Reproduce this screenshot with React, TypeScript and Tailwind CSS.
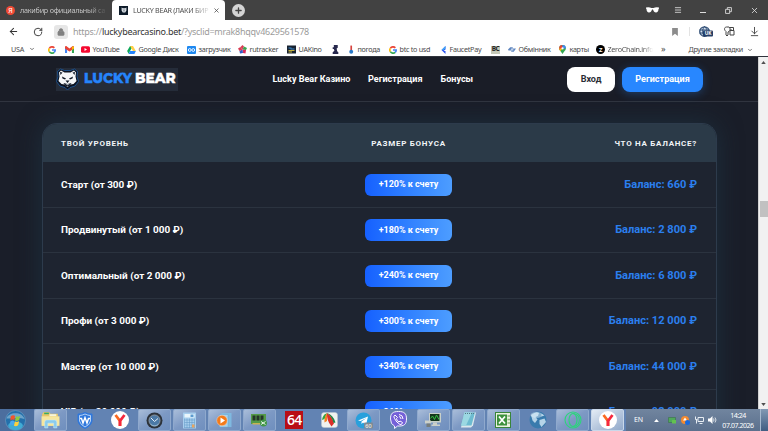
import type { ReactNode } from "react"
import { ArrowDownToLine, ArrowLeft, ChevronDown, Lock, Menu, Plus, RotateCw, X } from "lucide-react"

const levels = [
  { name: "Старт (от 300 ₽)", bonus: "+120% к счету", balance: "Баланс: 660 ₽" },
  { name: "Продвинутый (от 1 000 ₽)", bonus: "+180% к счету", balance: "Баланс: 2 800 ₽" },
  { name: "Оптимальный (от 2 000 ₽)", bonus: "+240% к счету", balance: "Баланс: 6 800 ₽" },
  { name: "Профи (от 3 000 ₽)", bonus: "+300% к счету", balance: "Баланс: 12 000 ₽" },
  { name: "Мастер (от 10 000 ₽)", bonus: "+340% к счету", balance: "Баланс: 44 000 ₽" },
  { name: "VIP (от 20 000 ₽)", bonus: "+360% к счету", balance: "Баланс: 92 000 ₽" },
]

function GoogleIcon() {
  return (
    <svg viewBox="0 0 24 24" className="h-[8px] w-[8px] shrink-0" fill="none" strokeWidth="5">
      <path d="M19 5.5A9.5 9.5 0 0 0 4 7" stroke="#ea4335" />
      <path d="M4 7a9.5 9.5 0 0 0 0 10" stroke="#fbbc05" />
      <path d="M4 17a9.5 9.5 0 0 0 14.500 2" stroke="#34a853" />
      <path d="M18.500 19a9 9 0 0 0 3-7H12" stroke="#4285f4" />
    </svg>
  )
}

function GmailIcon() {
  return (
    <svg viewBox="0 0 24 18" className="h-[7px] w-[9px] shrink-0">
      <path d="M0 2v16h5.500V7z" fill="#4285f4" />
      <path d="M24 2v16h-5.500V7z" fill="#34a853" />
      <path d="M0 3c0-3 3-4 5-2l7 5.500L19 1c2-2 5-1 5 2v3l-5.500 4L12 14 5.500 10 0 6z" fill="#ea4335" />
      <path d="M18.500 1.500 24 1v5l-5.500 4z" fill="#fbbc04" />
    </svg>
  )
}

function DriveIcon() {
  return (
    <svg viewBox="0 0 24 22" className="h-[8px] w-[9px] shrink-0">
      <path d="M8 0h8L8 14l-4 7-4-7z" fill="#0fa958" />
      <path d="M8 0h8l8 14h-8z" fill="#ffcf48" />
      <path d="M8 14h16l-4 8H4z" fill="#2684fc" />
    </svg>
  )
}

function YandexIcon() {
  return (
    <svg viewBox="0 0 36 36" className="h-[18px] w-[18px]">
      <circle cx="18" cy="18" r="18" fill="#fff" />
      <path d="M9 8l9 12v10" fill="none" stroke="#fb6a20" strokeWidth="5.500" />
      <path d="M27 8l-9 12v10" fill="none" stroke="#f5283f" strokeWidth="5.500" />
    </svg>
  )
}

function BearIcon() {
  return (
    <svg viewBox="0 0 46 44" className="h-[22px] w-[23px] shrink-0">
      <path d="M9 2l8 3h12l8-3 6 5-1 10 3 10-7 9-10 3-5 5-5-5-10-3-7-9 3-10L3 7z" fill="#0b1220" stroke="#1d5fa8" strokeWidth="1.500" />
      <path d="M10 5l7 4h12l7-4 4 4-1 8 2 9-6 6-6 1-6 5-6-5-6-1-6-6 2-9-1-8z" fill="#f4f6f8" />
      <path d="M8 8l5 1-4 5zM38 8l-5 1 4 5z" fill="#111a28" />
      <path d="M12 17l8 4-2 2-5-2zM34 17l-8 4 2 2 5-2zM19 25h8l-4 5zM15 30l8 2 8-2-3 5-5 2-5-2z" fill="#111a28" />
      <path d="M19 32h8l-4 3z" fill="#9aa3ae" />
    </svg>
  )
}

function Bookmark({ className, icon, children }: { className: string; icon?: ReactNode; children?: ReactNode }) {
  return (
    <div className={`flex h-full shrink-0 items-center gap-[2.500px] whitespace-nowrap ${className}`}>
      {icon}
      {children && <span>{children}</span>}
    </div>
  )
}

function TabBar() {
  return (
    <div className="flex h-[20px] bg-[#424242] text-[7.200px]">
      <div className="flex h-[20px] w-[112px] items-center pl-[6px]">
        <span className="mr-[5px] flex h-[9px] w-[9px] shrink-0 items-center justify-center rounded-full bg-[#f04a35] text-[7px] leading-none text-white">Я</span>
        <span className="whitespace-nowrap bg-gradient-to-r from-[#cfcfcf] from-80% to-[#555] bg-clip-text tracking-[-0.230px] text-transparent">лакибир официальный са</span>
      </div>
      <div className="flex h-[20px] w-[113px] items-center rounded-t-[4px] bg-white pl-[7px]">
        <span className="mr-[5px] flex h-[9px] w-[9px] shrink-0 items-center justify-center bg-[#0c1a28]">
          <svg viewBox="0 0 10 10" className="h-[6px] w-[6px]">
            <path d="M1 1l2 1h4l2-1v5L7 9H3L1 6z" fill="#dfe5ea" />
            <path d="M3 4h1v1H3zM6 4h1v1H6zM4 6h2v1H4z" fill="#0c1a28" />
          </svg>
        </span>
        <span className="w-[78px] whitespace-nowrap bg-gradient-to-r from-[#444] from-75% to-white bg-clip-text tracking-[-0.300px] text-transparent">LUCKY BEAR (ЛАКИ БИР</span>
        <X className="ml-[2px] h-[7px] w-[7px] shrink-0 text-[#444]" strokeWidth={2.5} />
      </div>
      <div className="flex h-[20px] items-center pl-[7px]">
        <span className="flex h-[13px] w-[13px] items-center justify-center rounded-full bg-[#d4d4d4]">
          <Plus className="h-[9px] w-[9px] text-[#444]" strokeWidth={3.5} />
        </span>
      </div>
      <div className="ml-auto flex h-[20px] items-center text-[#dedede]">
        <svg viewBox="0 0 26 12" className="mr-[15px] h-[6px] w-[13px]" fill="#fff">
          <path d="M0 1q7-1 11 1h4q4-2 11-1v2l-1 1c0 4-2 7-5 7s-5-2-6-6h-2c-1 4-3 6-6 6S1 8 1 4L0 3z" />
        </svg>
        <Menu className="mr-[18px] h-[8px] w-[8px]" strokeWidth={2.5} />
        <span className="mr-[19px] mt-[5px] h-px w-[6px] bg-[#dedede]" />
        <svg viewBox="0 0 12 12" className="mr-[18px] h-[7px] w-[7px]" fill="none" stroke="currentColor" strokeWidth="1.500">
          <path d="M1 4h7v7H1zM4 4V1h7v7H8" />
        </svg>
        <X className="mr-[9px] h-[9px] w-[9px]" strokeWidth={2.2} />
      </div>
    </div>
  )
}

function AddressBar() {
  return (
    <div className="flex h-[23px] items-center bg-white">
      <ArrowLeft className="ml-[8px] h-[11px] w-[11px] text-[#333]" strokeWidth={2.2} />
      <RotateCw className="ml-[14px] h-[10px] w-[10px] text-[#333]" strokeWidth={2.2} />
      <span className="ml-[11px] flex h-[14px] w-[14px] items-center justify-center rounded-[3px] bg-[#e6e6e6]">
        <Lock className="h-[8px] w-[8px] fill-[#808080] text-[#808080]" strokeWidth={2.5} />
      </span>
      <span className="ml-[5px] whitespace-nowrap text-[9px] tracking-[-0.265px] text-[#9b9b9b]">
        https://<span className="text-[#333]">luckybearcasino.bet</span>/?ysclid=mrak8hqqv4629561578
      </span>
      <div className="ml-auto flex items-center text-[#444]">
        <svg viewBox="0 0 10 14" className="h-[8px] w-[6px]" fill="#8c8c8c">
          <path d="M0 0h10v14L5 10l-5 4z" />
        </svg>
        <span className="ml-[11px] h-[9px] w-px bg-[#e3e3e3]" />
        <svg viewBox="0 0 28 22" className="ml-[9px] h-[11px] w-[14px]">
          <circle cx="11" cy="11" r="9.500" fill="#d7e2ef" stroke="#2f4d74" strokeWidth="2.500" />
          <path d="M1 8h20M1 14h10M11 1c-5 5-5 15 0 20M11 1c4 4 5 6 5 8" fill="none" stroke="#2f4d74" strokeWidth="2" />
          <rect x="8" y="9" width="20" height="12" rx="2" fill="#263f66" />
          <text x="18" y="18.500" textAnchor="middle" fill="#fff" fontSize="9.500" fontWeight="700">UK</text>
        </svg>
        <svg viewBox="0 0 22 22" className="ml-[11px] h-[11px] w-[11px]" fill="none" stroke="#444" strokeWidth="2">
          <path d="M4 11C-1 7 1 2 5 2h5c3 2 3 6 0 9l-2 1v6l-2 2-2-2zM11 3h8v5M12 9h8v9h-8zM14 9V6" />
        </svg>
        <ArrowDownToLine className="ml-[14px] mr-[8px] h-[11px] w-[11px]" strokeWidth={2} />
      </div>
    </div>
  )
}

function BookmarksBar() {
  return (
    <div className="flex h-[13px] items-center bg-white pl-[11px] text-[7.200px] tracking-[-0.280px] text-[#4a4a4a]">
      <Bookmark className="w-[37px]">
        <span className="flex items-center gap-[5px]">USA <ChevronDown className="h-[6px] w-[6px]" strokeWidth={3} /></span>
      </Bookmark>
      <Bookmark className="w-[17px]" icon={<GoogleIcon />} />
      <Bookmark className="w-[16px]" icon={<GmailIcon />} />
      <Bookmark
        className="w-[46px]"
        icon={
          <svg viewBox="0 0 18 13" className="h-[7px] w-[9px] shrink-0">
            <rect width="18" height="13" rx="3" fill="#f5082f" />
            <path d="M7 3.500v6l5-3z" fill="#fff" />
          </svg>
        }
      >
        YouTube
      </Bookmark>
      <Bookmark className="w-[60px]" icon={<DriveIcon />}>Google Диск</Bookmark>
      <Bookmark
        className="w-[51px]"
        icon={
          <svg viewBox="0 0 18 16" className="h-[8px] w-[9px] shrink-0" fill="none" stroke="#fff" strokeWidth="1.800">
            <rect width="18" height="16" rx="2" fill="#1e88f0" stroke="none" />
            <circle cx="5.500" cy="8" r="2.800" />
            <circle cx="12.500" cy="8" r="2.800" />
          </svg>
        }
      >
        загрузчик
      </Bookmark>
      <Bookmark
        className="w-[49px]"
        icon={
          <svg viewBox="0 0 18 18" className="h-[9px] w-[9px] shrink-0">
            <path d="M9 9L5 4l4-4 3 3z" fill="#d93c54" />
            <path d="M9 9l3-6 6 3-2 4z" fill="#36a84f" />
            <path d="M9 9l7 1-1 7-5-1z" fill="#d92b58" />
            <path d="M9 9l1 7-6 1-1-5z" fill="#315cc4" />
            <path d="M9 9l-6 3-3-5 5-3z" fill="#d93c54" />
          </svg>
        }
      >
        rutracker
      </Bookmark>
      <Bookmark
        className="w-[45px]"
        icon={
          <svg viewBox="0 0 18 16" className="h-[9px] w-[9px] shrink-0">
            <rect width="18" height="16" fill="#182230" />
            <path d="M3 4h6v2H3zM7 6h8v2H7z" fill="#3a86c9" />
            <path d="M3 9h12v2H3zM3 12h7v2H3z" fill="#c5b23e" />
          </svg>
        }
      >
        UAKino
      </Bookmark>
      <Bookmark
        className="w-[17px]"
        icon={
          <svg viewBox="0 0 12 16" className="h-[9px] w-[7px] shrink-0" fill="#27284d">
            <path d="M3 0h7v5L8 6l1 5 2 2v3H1v-3l3-3-1-3H1V4h2z" />
          </svg>
        }
      />
      <Bookmark
        className="w-[40px]"
        icon={
          <svg viewBox="0 0 8 16" className="mr-[1px] h-[9px] w-[5px] shrink-0">
            <path d="M2 1h3v9H2z" fill="#d7433d" />
            <circle cx="3.500" cy="12" r="3.500" fill="#2878c8" />
          </svg>
        }
      >
        погода
      </Bookmark>
      <Bookmark className="w-[52px]" icon={<GoogleIcon />}>btc to usd</Bookmark>
      <Bookmark
        className="w-[50px]"
        icon={
          <svg viewBox="0 0 12 16" className="h-[8px] w-[6px] shrink-0">
            <path d="M9 0L1 8l8 8V10H5l4-3z" fill="#2953ee" />
            <path d="M9 0v5L5 8 1 8z" fill="#42a7f6" />
          </svg>
        }
      >
        FaucetPay
      </Bookmark>
      <Bookmark
        className="w-[17px]"
        icon={<span className="flex h-[8px] w-[9px] items-center justify-center bg-[#c6cab9] text-[6.500px] font-bold leading-none tracking-[-0.500px] text-[#222]">BC</span>}
      />
      <Bookmark
        className="w-[51px]"
        icon={
          <svg viewBox="0 0 18 14" className="h-[7px] w-[8px] shrink-0">
            <path d="M0 7l5-5h6l-1 3h8l-5 7H7l1-3H1z" fill="#5f86bf" />
            <path d="M7 5h5v4H6z" fill="#bfd0e8" />
          </svg>
        }
      >
        Обмінник
      </Bookmark>
      <Bookmark
        className="w-[37px]"
        icon={
          <svg viewBox="0 0 12 16" className="mr-[1px] h-[9px] w-[7px] shrink-0">
            <path d="M6 0a6 6 0 0 1 6 6c0 4-4 5-6 10C4 11 0 10 0 6a6 6 0 0 1 6-6z" fill="#34a853" />
            <path d="M0 6a6 6 0 0 1 6-6v6L1 9z" fill="#ea4335" />
            <path d="M6 0a6 6 0 0 1 6 6H6z" fill="#4285f4" />
            <path d="M0 6l6 0-4 5z" fill="#fbbc05" />
            <circle cx="6" cy="6" r="2" fill="#fff" />
          </svg>
        }
      >
        карты
      </Bookmark>
      <Bookmark
        className="w-[58px]"
        icon={<span className="flex h-[9px] w-[9px] shrink-0 items-center justify-center rounded-full bg-black text-[6px] font-bold leading-none text-white">Z</span>}
      >
        <span className="bg-gradient-to-r from-[#4a4a4a] from-75% to-white bg-clip-text text-transparent">ZeroChain.info</span>
      </Bookmark>
      <span className="-mt-[2px] ml-[7px] text-[9px] leading-none">»</span>
      <span className="ml-auto whitespace-nowrap">Другие закладки</span>
      <ChevronDown className="ml-[4px] mr-[15px] h-[6px] w-[6px]" strokeWidth={3} />
    </div>
  )
}

function SiteHeader() {
  return (
    <header className="flex h-[45px] shrink-0 items-center border-b border-[#30343f] bg-[#1a1d27] pl-[56px] text-[9.050px] font-bold text-white">
      <div className="flex h-[23px] w-[122px] items-center bg-[#252c39] font-[Montserrat,'Open_Sans',sans-serif] text-[13.700px] font-extrabold leading-none [-webkit-text-stroke:0.350px]">
        <BearIcon />
        <span className="ml-[5px] text-[#2584fb]">LUCKY</span>
        <span className="ml-[3px]">BEAR</span>
      </div>
      <nav className="ml-[94.500px] flex whitespace-nowrap pt-px">
        <a className="w-[95.500px]">Lucky Bear Казино</a>
        <a className="w-[72.500px]">Регистрация</a>
        <a>Бонусы</a>
      </nav>
      <div className="ml-auto mr-[55px] flex gap-[7px]">
        <button className="h-[25px] w-[48px] rounded-[8px] bg-white pt-px text-[#2a2d35]">Вход</button>
        <button className="h-[25px] w-[81px] rounded-[8px] bg-[#2887ff] pt-px shadow-[0_2px_10px_rgba(40,135,255,0.3)]">Регистрация</button>
      </div>
    </header>
  )
}

function LevelTable() {
  return (
    <section className="ml-[42px] mt-[21px] w-[675px] shrink-0 overflow-hidden rounded-t-[15px] border border-b-0 border-[#2d3b4c] bg-[#1e2430] font-bold shadow-[0_0_24px_rgba(32,64,82,0.5)]">
      <div className="grid h-[38px] grid-cols-[1fr_87px_245px] items-center bg-[#2b3a48] pl-[18px] pr-[19px] pt-[1.500px] text-[8px] tracking-[0.720px] text-[#f1f4f7]">
        <span>ТВОЙ УРОВЕНЬ</span>
        <span className="whitespace-nowrap text-center">РАЗМЕР БОНУСА</span>
        <span className="text-right">ЧТО НА БАЛАНСЕ?</span>
      </div>
      {levels.map((level) => (
        <div key={level.name} className="grid h-[45.500px] grid-cols-[1fr_87px_245px] items-center border-b border-[#2b333f] pl-[18px] pr-[19px] pt-px">
          <span className="pt-px text-[9.950px] text-white">{level.name}</span>
          <span className="flex h-[22px] items-center justify-center rounded-[6px] bg-gradient-to-r from-[#1660ff] to-[#4d9dff] text-[9px] tracking-[-0.050px] text-white">{level.bonus}</span>
          <span className="pt-px text-right text-[11.100px] text-[#2b7fee]">{level.balance}</span>
        </div>
      ))}
    </section>
  )
}

function Slot({ variant = "pinned", children }: { variant?: "pinned" | "running" | "focused"; children: ReactNode }) {
  const frames = {
    pinned: "border-transparent",
    running: "border-[#8fa9cd] bg-gradient-to-br from-[#a9bdd9] via-[#7d99c4] to-[#6f8fbe]",
    focused: "border-[#c9d8ea] bg-gradient-to-br from-[#e4ecf5] via-[#b7c8de] to-[#93aacb]",
  }
  return (
    <div className="flex h-full w-[34.830px] shrink-0">
      <div className={`flex h-full w-[33px] items-center justify-center rounded-[2px] border ${frames[variant]}`}>{children}</div>
    </div>
  )
}

function Taskbar() {
  return (
    <div className="flex h-[22px] w-full shrink-0 bg-[#6283b3]">
      <div className="flex w-[34px] shrink-0 items-center bg-[#4c6e9e] pl-[5px]">
        <svg viewBox="0 0 40 40" className="h-[21px] w-[21px]">
          <circle cx="20" cy="20" r="19" fill="#2470ab" stroke="#7ca8ca" />
          <ellipse cx="20" cy="30" rx="14" ry="8" fill="#4fc4e6" opacity=".7" />
          <path d="M3 16C5 4 33 1 37 17 25 13 14 17 3 16z" fill="#9fc4df" opacity=".6" />
          <path d="M11 12q4-3 8-1l-1 8q-4-2-8 1z" fill="#f3562a" />
          <path d="M21 12q4 2 8-1l-2 8q-4 3-8 1z" fill="#8dcb3e" />
          <path d="M10 22q4-3 8-1l-2 8q-4-2-7 1z" fill="#48a8f0" />
          <path d="M19 22q4 2 8-1l-2 8q-4 3-8 1z" fill="#ffd03c" />
        </svg>
      </div>
      <Slot variant="running">
        <svg viewBox="0 0 36 34" className="h-[18px] w-[19px]">
          <path d="M2 6l3-4h10l3 3h14v23H2z" fill="#e8c768" />
          <path d="M6 3h9v3H6z" fill="#36a967" />
          <path d="M16 6h13v4H16z" fill="#f6f4dc" />
          <path d="M1 10h34v18H1z" fill="#f7e69e" />
          <path d="M7 21q0-4 4-4h15q4 0 4 4v11h-6v-9H13v9H7z" fill="#8acbed" stroke="#c9ecfa" />
        </svg>
      </Slot>
      <Slot>
        <svg viewBox="0 0 32 34" className="h-[17px] w-[16px]">
          <path d="M16 1q7 4 14 3v14q-2 10-14 15Q4 28 2 18V4q7 1 14-3z" fill="#2f78dd" stroke="#2f78dd" strokeWidth="2" />
          <path d="M16 4q6 3 11 3v11q-2 8-11 12Q7 26 5 18V7q5 0 11-3z" fill="none" stroke="#e3effc" strokeWidth="1.500" />
          <path d="M6 13h3l3 9 4-11 4 11 3-9h3" fill="none" stroke="#fff" strokeWidth="2.800" />
        </svg>
      </Slot>
      <Slot><YandexIcon /></Slot>
      <Slot variant="running">
        <svg viewBox="0 0 34 34" className="h-[17px] w-[17px]">
          <circle cx="17" cy="17" r="16" fill="#2c323a" />
          <circle cx="17" cy="17" r="11" fill="#4b79a6" stroke="#8b98a6" strokeWidth="2" />
          <path d="M10 12l7 7 7-6" fill="none" stroke="#e4edf5" strokeWidth="2" />
          <path d="M8 23q9 7 18 0-2 6-9 6t-9-6z" fill="#9cc8ea" opacity=".6" />
        </svg>
      </Slot>
      <Slot variant="running">
        <svg viewBox="0 0 26 32" className="h-[17px] w-[13px]">
          <rect width="26" height="32" rx="1" fill="#a8cfee" />
          <path d="M3 3h20v7H3z" fill="#e9f6fc" />
          <path d="M15 4h6v5h-6z" fill="#5b9bd0" />
          <path d="M3 15h20M3 20h20M3 25h20M3 30h20M3 12v19M8 12v19M13 12v19M18 12v19M23 12v19" stroke="#5f95c5" />
          <path d="M18 24h5v6h-5z" fill="#e9a45e" />
        </svg>
      </Slot>
      <Slot variant="running">
        <svg viewBox="0 0 34 30" className="h-[15px] w-[17px]">
          <path d="M11 0h20v28H11z" fill="#7fb9e0" />
          <path d="M7 3h17v25H7z" fill="#a7d3ef" stroke="#6aa4cf" />
          <circle cx="12" cy="15" r="10.500" fill="#f27a1b" stroke="#f7d7bd" />
          <path d="M9 9v12l9-6z" fill="#fff" />
        </svg>
      </Slot>
      <Slot variant="running">
        <svg viewBox="0 0 36 28" className="h-[14px] w-[18px]">
          <path d="M2 2h30v20H2z" fill="#549a48" />
          <path d="M5 5h6v10H5zM13 5h6v10h-6zM21 5h6v10h-6z" fill="#25352a" />
          <path d="M5 20h23v3H5z" fill="#c8b351" />
          <circle cx="27" cy="20" r="7" fill="#419648" />
          <path d="M22 17l9 6M31 17l-9 6" stroke="#e3f5e3" strokeWidth="2" />
        </svg>
      </Slot>
      <Slot>
        <span className="flex h-[18px] w-[18px] items-center justify-center bg-[#b90e15] font-['Open_Sans',sans-serif] text-[14px] font-semibold leading-none tracking-[-0.800px] text-white">64</span>
      </Slot>
      <Slot>
        <svg viewBox="0 0 34 32" className="h-[16px] w-[17px]">
          <rect x="1" y="1" width="32" height="30" rx="5" fill="#f1f2f0" stroke="#bfc9ce" />
          <path d="M12 2Q3 6 2 16l5-2z" fill="#2ea442" />
          <path d="M12 2Q6 10 7 21l5-3z" fill="#f28322" />
          <path d="M12 2q-1 15 9 27l5-6Q23 9 12 2z" fill="#dc3029" />
          <path d="M12 2q12 3 17 19l-4 1Q22 9 12 2z" fill="#218645" />
        </svg>
      </Slot>
      <Slot variant="running">
        <svg viewBox="0 0 36 34" className="h-[17px] w-[18px]">
          <circle cx="17" cy="17" r="16" fill="#28a0dc" />
          <path d="M6 17l20-8-4 17-6-5-3 3v-5l10-7-12 6z" fill="#fff" />
          <rect x="18" y="21" width="18" height="12" rx="2" fill="#7d8a93" />
          <text x="27" y="31" textAnchor="middle" fill="#fff" fontSize="11">60</text>
        </svg>
      </Slot>
      <Slot>
        <svg viewBox="0 0 34 36" className="h-[18px] w-[17px]">
          <path d="M17 1C5 1 1 5 1 16q0 11 8 14v5l6-5c14 1 18-4 18-14C33 5 29 1 17 1z" fill="#7561d8" stroke="#f2f1ff" strokeWidth="2" />
          <path d="M10 8q-4 3-1 7 4 8 11 12 4 1 5-4l-5-3-2 2q-5-3-5-7l2-2zM18 7q8 1 8 9M18 11q4 1 4 5" fill="none" stroke="#fff" strokeWidth="2" />
        </svg>
      </Slot>
      <Slot variant="running">
        <svg viewBox="0 0 36 32" className="h-[16px] w-[18px]">
          <path d="M8 2h24v19H8z" fill="#c9d0c9" />
          <path d="M10 4h19v14H10z" fill="#14361c" />
          <path d="M11 13l4-5 4 7 4-9 5 9" fill="none" stroke="#35bf43" strokeWidth="2" />
          <path d="M16 21h8v4h6v3H13v-3h3zM0 17h12v6H0z" fill="#ccd0c9" />
          <path d="M3 23h8v7H3z" fill="#767d7b" />
        </svg>
      </Slot>
      <Slot variant="running">
        <svg viewBox="0 0 34 32" className="h-[16px] w-[17px]">
          <path d="M9 1h23l-6 26-4 4H2z" fill="#dce8ed" />
          <path d="M9 1h21l-7 26H2z" fill="#6dbbd0" />
          <path d="M9 1h15L12 27H2z" fill="#9bd8e2" />
          <path d="M10 3h19" stroke="#557782" strokeWidth="2" strokeDasharray="2 2" />
        </svg>
      </Slot>
      <Slot variant="running">
        <svg viewBox="0 0 32 32" className="h-[16px] w-[16px]">
          <rect x="1" y="1" width="30" height="30" fill="#eaf2df" stroke="#39853a" strokeWidth="2" />
          <path d="M4 5h20v22H4z" fill="#3c913c" />
          <path d="M8 9l12 14M20 9L8 23" stroke="#fff" strokeWidth="3.500" />
          <path d="M25 8h5M25 15h5M25 22h5" stroke="#89b57b" strokeWidth="3" />
        </svg>
      </Slot>
      <Slot>
        <svg viewBox="0 0 36 36" className="h-[18px] w-[18px]">
          <circle cx="18" cy="18" r="17" fill="#397bad" />
          <path d="M4 8Q14 0 20 4l-2 6-5 2 4 5-5 7-5-5zM21 18l10-3 3 7-9 10-4-6zM25 5l6 4-6 2z" fill="#b6d4e8" />
          <ellipse cx="15" cy="8" rx="12" ry="6" fill="#e0f1fa" opacity=".45" />
        </svg>
      </Slot>
      <Slot variant="running">
        <svg viewBox="0 0 36 36" className="h-[18px] w-[18px]" fill="none" stroke="#2bd67b" strokeWidth="2.200">
          <circle cx="18" cy="18" r="16" />
          <ellipse cx="18" cy="18" rx="8" ry="13" />
          <path d="M18 5c17 1 17 25 0 26" />
        </svg>
      </Slot>
      <Slot variant="focused"><YandexIcon /></Slot>
      <div className="flex flex-1 items-center bg-gradient-to-b from-[#71859f] to-[#5b708d] pl-[8px] text-[7px] text-white">
        <span className="mr-[10px] w-[10px] tracking-[-0.300px]">EN</span>
        <svg viewBox="0 0 8 5" className="mr-[9px] h-[3px] w-[5px]"><path d="M4 0l4 5H0z" fill="#fff" /></svg>
        <svg viewBox="0 0 16 14" className="mr-[5px] h-[7px] w-[8px]">
          <path d="M1 1h14v10H1z" fill="#50a85b" stroke="#356b41" />
          <path d="M8 6h8v7H8z" fill="#62c250" />
        </svg>
        <svg viewBox="0 0 18 18" className="mr-[5px] h-[9px] w-[9px]">
          <circle cx="8" cy="8" r="8" fill="#f48a2f" />
          <path d="M8 3l4 6H4z" fill="#fff" />
          <circle cx="13" cy="13" r="5" fill="#1769df" />
        </svg>
        <svg viewBox="0 0 18 16" className="mr-[4px] h-[8px] w-[9px]" fill="none" stroke="#e7edf3" strokeWidth="2">
          <path d="M6 3h11v8H6zM9 15h6M1 1v6h4M3 7v8" />
        </svg>
        <svg viewBox="0 0 18 16" className="h-[8px] w-[9px]" fill="none" stroke="#fff" strokeWidth="1.500">
          <path d="M0 5h4l5-5v16l-5-5H0z" fill="#fff" stroke="none" />
          <path d="M11 5q2 3 0 6M14 3q4 5 0 10" />
        </svg>
        <div className="ml-auto w-[32px] whitespace-nowrap pt-px text-center leading-[10px] tracking-[-0.450px]">
          <div>14:24</div>
          <div>07.07.2026</div>
        </div>
        <span className="ml-[6px] h-full w-[8px] border-l border-[#a5b8ce] bg-gradient-to-b from-[#8299b4] to-[#415d82]" />
      </div>
    </div>
  )
}

export default function App() {
  return (
    <div className="flex h-[431px] w-[768px] flex-col bg-[#1a1e29] font-['Noto_Sans','Open_Sans',sans-serif]">
      <div className="h-[57px] shrink-0 border-b border-[#30343c] bg-white">
        <TabBar />
        <AddressBar />
        <BookmarksBar />
      </div>
      <div className="flex h-[352px] shrink-0">
        <main className="flex h-full w-[758px] flex-col overflow-hidden font-[Roboto,sans-serif]">
          <SiteHeader />
          <LevelTable />
        </main>
        <aside className="flex h-full w-[10px] flex-col items-center border-l border-[#d3d3d3] bg-[#f1f1f1] pb-[3px] pt-[4px]">
          <svg viewBox="0 0 6 4" className="h-[3px] w-[5px]"><path d="M3 0l3 4H0z" fill="#505050" /></svg>
          <span className="mt-[137px] h-[16px] w-[8px] bg-[#c1c1c1]" />
          <svg viewBox="0 0 6 4" className="mt-auto h-[3px] w-[5px]"><path d="M0 0h6L3 4z" fill="#505050" /></svg>
        </aside>
      </div>
      <Taskbar />
    </div>
  )
}
